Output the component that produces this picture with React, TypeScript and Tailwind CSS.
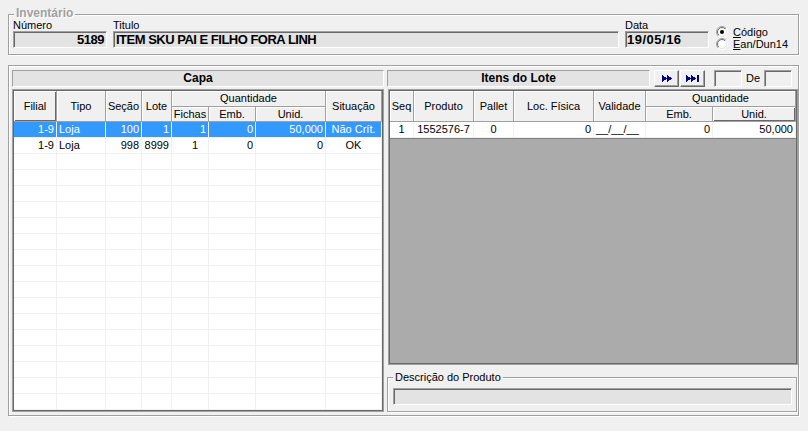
import React from "react";

const FONT = "font-['Liberation_Sans',Arial,sans-serif]";

function Field({ className = "", children }: { className?: string; children?: React.ReactNode }) {
  return (
    <div
      className={`h-[17px] bg-[#e3e3e3] border border-t-[#a0a0a0] border-l-[#a0a0a0] border-r-white border-b-white shadow-[inset_1px_1px_0_#696969] flex items-center overflow-hidden whitespace-nowrap ${className}`}
    >
      {children}
    </div>
  );
}

function Group({
  className = "",
  label,
  labelCls = "top-[-7px] leading-[13px]",
  children,
}: {
  className?: string;
  label?: React.ReactNode;
  labelCls?: string;
  children?: React.ReactNode;
}) {
  return (
    <div className={`relative border border-[#a0a0a0] shadow-[inset_1px_1px_0_#fff,1px_1px_0_#fff] ${className}`}>
      {label && (
        <div className={`absolute left-[5px] px-[2px] bg-[#f0f0f0] whitespace-nowrap ${labelCls}`}>
          {label}
        </div>
      )}
      {children}
    </div>
  );
}

function Radio({ checked, id }: { checked?: boolean; id: string }) {
  return (
    <svg width="12" height="12" viewBox="0 0 12 12">
      <defs>
        <linearGradient id={`${id}a`} x1="0" y1="0" x2="1" y2="1">
          <stop offset="0" stopColor="#a0a0a0" />
          <stop offset="0.5" stopColor="#a0a0a0" />
          <stop offset="0.5" stopColor="#ffffff" />
          <stop offset="1" stopColor="#ffffff" />
        </linearGradient>
        <linearGradient id={`${id}b`} x1="0" y1="0" x2="1" y2="1">
          <stop offset="0" stopColor="#696969" />
          <stop offset="0.5" stopColor="#696969" />
          <stop offset="0.5" stopColor="#e3e3e3" />
          <stop offset="1" stopColor="#e3e3e3" />
        </linearGradient>
      </defs>
      <circle cx="6" cy="6" r="5.5" fill="none" stroke={`url(#${id}a)`} />
      <circle cx="6" cy="6" r="4.5" fill="#fff" stroke={`url(#${id}b)`} />
      {checked && <circle cx="6" cy="6" r="2" fill="#000" />}
    </svg>
  );
}

const HD =
  "bg-[#f0f0f0] border-r border-b border-[#a0a0a0] shadow-[inset_1px_1px_0_#fff] flex items-center justify-center whitespace-nowrap overflow-hidden";
const HD_DARK =
  "bg-[#f0f0f0] border-r border-b border-[#a0a0a0] shadow-[inset_1px_1px_0_#fff,inset_-1px_-1px_0_#696969] flex items-center justify-center whitespace-nowrap overflow-hidden";

type Cell = { t: string; a: "l" | "r" | "c" | "p" };

const leftRows: Cell[][] = [
  [
    { t: "1-9", a: "r" },
    { t: "Loja", a: "l" },
    { t: "100", a: "r" },
    { t: "1", a: "r" },
    { t: "1", a: "r" },
    { t: "0", a: "r" },
    { t: "50,000", a: "r" },
    { t: "Não Crít.", a: "c" },
  ],
  [
    { t: "1-9", a: "r" },
    { t: "Loja", a: "l" },
    { t: "998", a: "r" },
    { t: "8999", a: "r" },
    { t: "1", a: "p" },
    { t: "0", a: "r" },
    { t: "0", a: "r" },
    { t: "OK", a: "c" },
  ],
];

const rightRow: Cell[] = [
  { t: "1", a: "c" },
  { t: "1552576-7", a: "c" },
  { t: "0", a: "c" },
  { t: "0", a: "r" },
  { t: "__/__/__", a: "l" },
  { t: "0", a: "r" },
  { t: "50,000", a: "r" },
];

function alignCls(a: Cell["a"]) {
  if (a === "r") return "justify-end pr-[2px]";
  if (a === "l") return "justify-start pl-[2px]";
  if (a === "p") return "justify-start pl-[20px]";
  return "justify-center";
}

function FF() {
  return (
    <svg width="10" height="7" viewBox="0 0 10 7" shapeRendering="crispEdges">
      <path d="M0 0L5 3.5L0 7Z M5 0L10 3.5L5 7Z" fill="#000080" />
    </svg>
  );
}
function Last() {
  return (
    <svg width="13" height="7" viewBox="0 0 13 7" shapeRendering="crispEdges">
      <path d="M0 0L5 3.5L0 7Z M5 0L10 3.5L5 7Z M11 0H13V7H11Z" fill="#000080" />
    </svg>
  );
}

const BTN =
  "w-[25px] h-[17px] bg-[#f0f0f0] border border-t-white border-l-white border-r-[#696969] border-b-[#696969] shadow-[inset_-1px_-1px_0_#a0a0a0] flex items-center justify-center";

export default function App() {
  const emptyRows = Array.from({ length: 16 });
  return (
    <div
      className={`w-[808px] h-[431px] bg-[#f0f0f0] text-black text-[11px] leading-[13px] ${FONT} pt-[14px] pl-[8px] overflow-hidden`}
    >
      {/* Inventário */}
      <Group
        className="w-[791px] h-[41px]"
        labelCls="top-[-7px] leading-[11px] h-[11px]"
        label={
          <span className="text-[12px] leading-[11px] font-bold text-[#a0a0a0] [text-shadow:1px_1px_0_#fff]">
            Inventário
          </span>
        }
      >
        <div className="flex pl-[4px] pt-[4px]">
          <div className="w-[94px] flex flex-col">
            <div className="h-[12px] leading-[11px] pt-[1px]">Número</div>
            <Field className="justify-end pr-[2px] font-bold text-[13px] leading-[15px] tracking-[-0.5px]">5189</Field>
          </div>
          <div className="w-[506px] ml-[6px] flex flex-col">
            <div className="h-[12px] leading-[11px] pt-[1px]">Titulo</div>
            <Field className="pl-[2px] font-bold text-[13px] leading-[15px] tracking-[-0.5px]">
              ITEM SKU PAI E FILHO FORA LINH
            </Field>
          </div>
          <div className="w-[84px] ml-[6px] flex flex-col">
            <div className="h-[12px] leading-[11px] pt-[1px]">Data</div>
            <Field className="pl-[1px] font-bold text-[13px] leading-[15px] tracking-[0.5px]">19/05/16</Field>
          </div>
          <div className="ml-[7px] pt-[7px] flex flex-col">
            <div className="h-[12px] flex items-center gap-[5px]">
              <Radio checked id="r1" />
              <span className="leading-[12px]">
                <span className="underline">C</span>ódigo
              </span>
            </div>
            <div className="h-[12px] flex items-center gap-[5px]">
              <Radio id="r2" />
              <span className="leading-[12px]">
                <span className="underline">E</span>an/Dun14
              </span>
            </div>
          </div>
        </div>
      </Group>

      {/* Main group */}
      <Group className="w-[791px] h-[351px] mt-[10px]">
        <div className="flex pl-[3px] pt-[4px]">
          {/* Left column: Capa */}
          <div className="w-[372px] flex flex-col">
            <div className="h-[17px] bg-[#e3e3e3] border border-t-[#a0a0a0] border-l-[#a0a0a0] border-r-white border-b-white flex items-center justify-center font-bold text-[12px]">
              Capa
            </div>
            <div className="mt-[2px] h-[323px] border border-[#a0a0a0]">
              <div className="h-full border border-[#696969] bg-white overflow-hidden">
                <div className="grid grid-cols-[43px_49px_36px_30px_37px_47px_70px_56px] grid-rows-[16px_15px]">
                  <div className={`${HD_DARK} row-span-2`}>Filial</div>
                  <div className={`${HD} row-span-2`}>Tipo</div>
                  <div className={`${HD} row-span-2`}>Seção</div>
                  <div className={`${HD} row-span-2`}>Lote</div>
                  <div className={`${HD} col-span-3`}>Quantidade</div>
                  <div className={`${HD} row-span-2`}>Situação</div>
                  <div className={HD}>Fichas</div>
                  <div className={HD}>Emb.</div>
                  <div className={HD}>Unid.</div>
                </div>
                {leftRows.map((row, i) => (
                  <div
                    key={i}
                    className={`grid grid-cols-[43px_49px_36px_30px_37px_47px_70px_56px] h-[16px] ${
                      i === 0 ? "bg-[#3399ff] text-white" : "bg-white"
                    }`}
                  >
                    {row.map((c, j) => (
                      <div
                        key={j}
                        className={`border-r border-b border-[#f0f0f0] flex items-center whitespace-nowrap overflow-hidden ${alignCls(
                          c.a
                        )}`}
                      >
                        {c.t}
                      </div>
                    ))}
                  </div>
                ))}
                {emptyRows.map((_, i) => (
                  <div
                    key={`e${i}`}
                    className="grid grid-cols-[43px_49px_36px_30px_37px_47px_70px_56px] h-[16px] bg-white"
                  >
                    {Array.from({ length: 8 }).map((__, j) => (
                      <div key={j} className="border-r border-b border-[#f0f0f0]" />
                    ))}
                  </div>
                ))}
              </div>
            </div>
          </div>

          {/* Right column: Itens do Lote */}
          <div className="w-[411px] ml-[3px] flex flex-col">
            <div className="flex items-start h-[17px]">
              <div className="w-[263px] h-[17px] bg-[#e3e3e3] border border-t-[#a0a0a0] border-l-[#a0a0a0] border-r-white border-b-white flex items-center justify-center font-bold text-[12px]">
                Itens do Lote
              </div>
              <div className={`${BTN} ml-[4px]`}>
                <FF />
              </div>
              <div className={`${BTN} ml-[1px]`}>
                <Last />
              </div>
              <Field className="w-[28px] ml-[9px] bg-[#f0f0f0]" />
              <span className="ml-[4px] leading-[17px]">De</span>
              <Field className="w-[28px] ml-[4px] bg-[#f0f0f0]" />
            </div>
            <div className="mt-[2px] ml-[1px] w-[410px] h-[276px] border border-[#a0a0a0]">
              <div className="h-full border border-[#696969] bg-[#ababab] overflow-hidden">
                <div className="grid grid-cols-[24px_60px_40px_80px_52px_67px_83px] grid-rows-[16px_15px]">
                  <div className={`${HD} row-span-2`}>Seq</div>
                  <div className={`${HD} row-span-2`}>Produto</div>
                  <div className={`${HD} row-span-2`}>Pallet</div>
                  <div className={`${HD} row-span-2`}>Loc. Física</div>
                  <div className={`${HD} row-span-2`}>Validade</div>
                  <div className={`${HD} col-span-2`}>Quantidade</div>
                  <div className={HD}>Emb.</div>
                  <div className={HD_DARK}>Unid.</div>
                </div>
                <div className="grid grid-cols-[24px_60px_40px_80px_52px_67px_83px] h-[17px] bg-white border-b border-[#808080]">
                  {rightRow.map((c, j) => (
                    <div
                      key={j}
                      className={`border-r border-b border-[#f0f0f0] flex items-center whitespace-nowrap overflow-hidden ${alignCls(
                        c.a
                      )}`}
                    >
                      {c.t}
                    </div>
                  ))}
                </div>
              </div>
            </div>
            <Group className="mt-[12px] w-[410px] h-[35px]" label={<span>Descrição do Produto</span>}>
              <div className="pl-[5px] pt-[10px]">
                <Field className="w-[399px]" />
              </div>
            </Group>
          </div>
        </div>
      </Group>
    </div>
  );
}
